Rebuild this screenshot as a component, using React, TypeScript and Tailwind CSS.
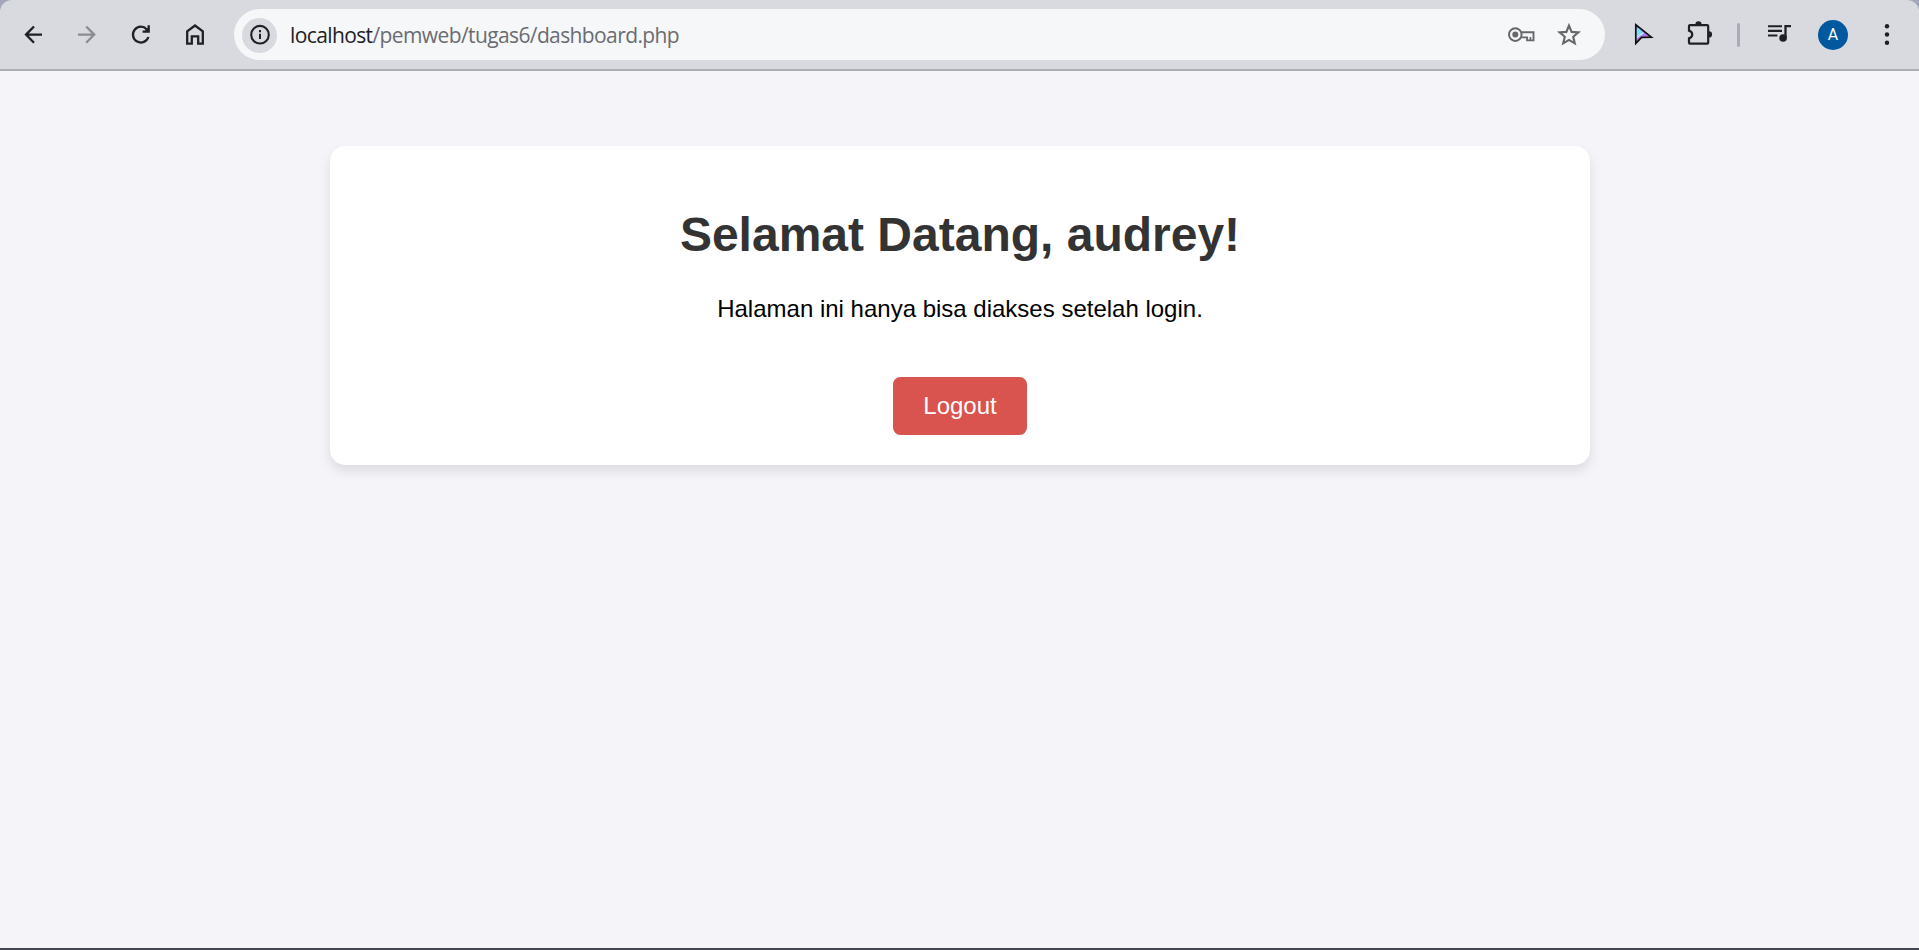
import type { ReactNode } from "react";

function Icon({ children, className = "" }: { children: ReactNode; className?: string }) {
  return (
    <svg
      width="30"
      height="30"
      viewBox="0 0 30 30"
      fill="none"
      stroke="currentColor"
      strokeWidth="2.3"
      className={`shrink-0 ${className}`}
    >
      {children}
    </svg>
  );
}

function Slot({ children }: { children: ReactNode }) {
  return <button className="flex w-[54px] shrink-0 items-center justify-center">{children}</button>;
}

function Toolbar() {
  return (
    <div className="bg-[#a4a7b7]">
      <header className="flex h-[71px] items-center rounded-t-[12px] border-b-2 border-[#adadb5] bg-[#d9dadf] pl-[6px] pt-px text-[#1f2024]">
        <Slot>
          <Icon>
            <path d="M16 6.5 8 14.6l8 8.1M8 14.6h16" />
          </Icon>
        </Slot>
        <Slot>
          <Icon className="text-[#8b8c91]">
            <path d="M14.2 6.5l8 8.1-8 8.1M22 14.6H6" />
          </Icon>
        </Slot>
        <Slot>
          <Icon>
            <path d="M22.4 17a7.9 7.9 0 1 1-1.6-7.6" />
            <path d="M16.6 11.7h6.1v-6.5" />
            <path d="M18.3 11.5l4.2-4.2v4.2z" fill="currentColor" stroke="none" />
          </Icon>
        </Slot>
        <Slot>
          <Icon>
            <path d="M7.2 23.6V11.4L15 5.5l7.8 5.9v12.2h-4.6v-7.2h-6.4v7.2z" />
          </Icon>
        </Slot>

        <div className="ml-3 mt-2 flex h-[51px] w-[1371px] shrink-0 items-center self-start rounded-full bg-[#f5f7f9] pl-[8px] pr-[21px] pt-px">
          <span className="flex size-[35px] items-center justify-center rounded-full bg-[#d9dadf]">
            <Icon>
              <circle cx="15" cy="14.7" r="8.8" strokeWidth="2.1" />
              <path d="M15 13.7v5.4M15 10.1v2.1" strokeWidth="2" />
            </Icon>
          </span>
          <span className="ml-[13px] whitespace-nowrap pb-px font-['Open_Sans','Noto_Sans',sans-serif] text-[21px] leading-[30px] tracking-[-0.61px] text-[#6b6c70]">
            <span className="text-[#1f2024]">localhost</span>/pemweb/tugas6/dashboard.php
          </span>
          <span className="ml-auto flex gap-[18px] text-[#66676a]">
            <Icon>
              <circle cx="9.3" cy="14.6" r="6.3" strokeWidth="2" />
              <circle cx="9.3" cy="14.6" r="3" fill="currentColor" stroke="none" />
              <path d="M15.2 12.2h12.3v8.2h-6.4v-3h-5.9" strokeWidth="1.9" />
              <path d="M24.4 17v3.5" strokeWidth="1.6" />
            </Icon>
            <Icon>
              <path
                d="M15 5.6l2.6 6.3 6.8.5-5.2 4.4 1.6 6.6L15 19.9l-5.8 3.5 1.6-6.6-5.2-4.4 6.8-.5z"
                strokeWidth="2.1"
              />
            </Icon>
          </span>
        </div>

        <div className="ml-[24px] flex items-center">
          <Icon>
            <path d="M6.8 4.8v18.6l5.8-6 9.8-.2z" fill="#b675ed" stroke="none" />
            <path d="M7 9.5v8l8-3.5-5-7z" fill="#7edbf8" stroke="none" />
            <path d="M7 18.4l7.5-5.8" stroke="#f4efff" strokeWidth="1" />
            <path d="M6.8 4.8v18.6l5.8-6 9.8-.2z" stroke="#111114" strokeWidth="1.7" />
          </Icon>
        </div>
        <div className="ml-[25px] flex items-center">
          <Icon>
            <path
              d="M6 5.2h17.2a1 1 0 0 1 1 1V22.7a1 1 0 0 1-1 1H6a1 1 0 0 1-1-1v-4.3c4.3-1.4 4.3-6.4 0-7.8V6.2a1 1 0 0 1 1-1z"
              strokeWidth="2.2"
            />
            <path d="M11.4 4.4a3 3 0 0 1 6.2 0zM25 11.3a3 3 0 0 1 0 6.2z" fill="currentColor" stroke="none" />
          </Icon>
        </div>
        <span className="ml-[23px] h-6 w-[3px] rounded-full bg-[#a7acba]" />
        <Icon className="ml-[25px]">
          <path d="M3 6.2h14M3 10.9h14M3 15.5h9.4" strokeWidth="2.1" />
          <path d="M20.5 18V6.2H26" strokeWidth="2.3" />
          <circle cx="18.1" cy="18" r="3.8" fill="currentColor" stroke="none" />
        </Icon>
        <span className="ml-[23px] flex size-[30px] items-center justify-center rounded-full bg-[#00589f] font-['Roboto',sans-serif] text-[16px] leading-none text-white">
          A
        </span>
        <Icon className="ml-[24px]">
          <g fill="currentColor" stroke="none">
            <circle cx="15" cy="6.2" r="2.2" />
            <circle cx="15" cy="14.5" r="2.2" />
            <circle cx="15" cy="22.8" r="2.2" />
          </g>
        </Icon>
      </header>
    </div>
  );
}

export default function App() {
  return (
    <div className="flex h-[950px] flex-col overflow-hidden border-b-2 border-[#42454f] bg-[#f4f4f9]">
      <Toolbar />
      <main className="mx-auto mt-[75px] flex h-[319px] w-[1260px] flex-col items-center rounded-[15px] bg-white pt-[62px] font-['Liberation_Sans',sans-serif] shadow-[0_6px_12px_rgba(0,0,0,0.1)]">
        <h1 className="pl-px text-[48px] font-bold leading-[54px] text-[#333333]">Selamat Datang, audrey!</h1>
        <p className="mt-[33px] pl-px text-[24px] leading-[27px] text-black">
          Halaman ini hanya bisa diakses setelah login.
        </p>
        <a
          href="#"
          className="mt-[55px] flex h-[58px] w-[134px] items-center justify-center rounded-[7.5px] bg-[#d9534f] pb-0.5 pl-px text-[24px] leading-[27px] text-white"
        >
          Logout
        </a>
      </main>
    </div>
  );
}
